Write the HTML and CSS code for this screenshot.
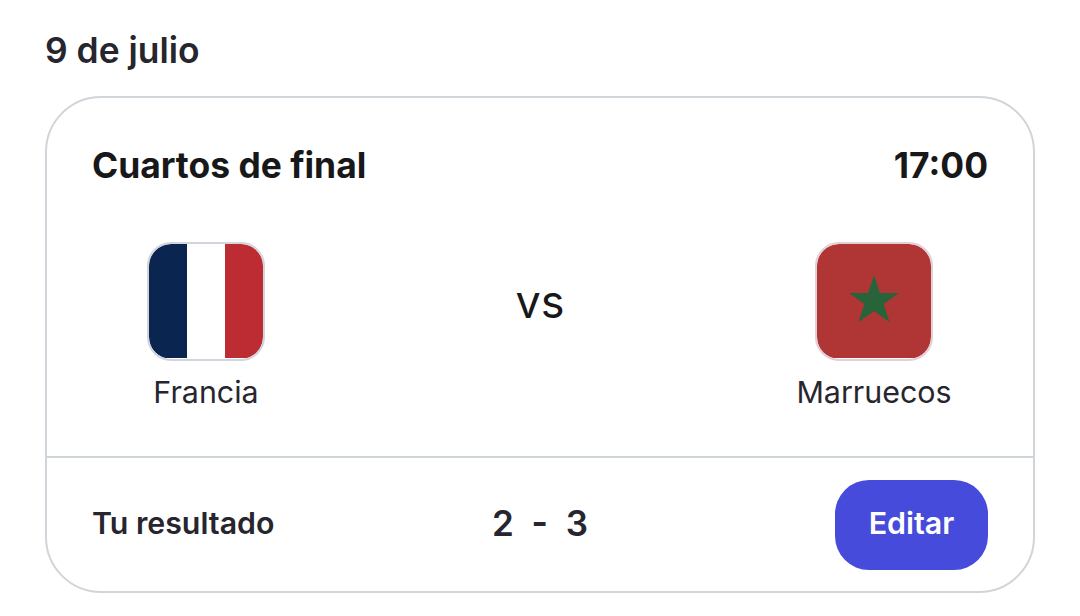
FILE: index.html
```html
<!DOCTYPE html>
<html lang="es">
<head>
    <meta charset="UTF-8">
    <meta name="viewport" content="width=device-width, initial-scale=1.0">
    <title>Partidos</title>
    <link rel="stylesheet" href="styles.css">
</head>
<body>
    <h2 class="date">9 de julio</h2>
    <div class="card">
        <div class="match">
            <div class="match-header">
                <span>Cuartos de final</span>
                <span>17:00</span>
            </div>
            <div class="teams">
                <div class="team">
                    <div class="flag france"></div>
                    <span class="team-name">Francia</span>
                </div>
                <span class="vs">vs</span>
                <div class="team">
                    <div class="flag morocco">
                        <svg width="50" height="49" viewBox="0 0 50 49">
                            <path fill="#28633a" d="M25 1L30.9 18.9H50L34.6 30.1L40.6 48.3L25 37L9.4 48.3L15.4 30.1L0 18.9H19.1Z"/>
                        </svg>
                    </div>
                    <span class="team-name">Marruecos</span>
                </div>
            </div>
        </div>
        <div class="result">
            <span class="result-label">Tu resultado</span>
            <div class="score">
                <span>2</span>
                <span class="dash">-</span>
                <span>3</span>
            </div>
            <button class="edit" type="button">Editar</button>
        </div>
    </div>
</body>
</html>
```

FILE: styles.css
```css
* {
    box-sizing: border-box;
}

body {
    margin: 0;
    padding: 29px 45px 0;
    background-color: #fff;
    color: #27262f;
    font-family: Inter, sans-serif;
}

.date {
    margin: 0 0 23px;
    font-size: 35.4px;
    font-weight: 600;
    line-height: 44px;
}

.card {
    height: 497px;
    border: 2px solid #d0d5da;
    border-radius: 56px;
}

.match {
    height: 360px;
    padding: 46px 45px 0;
    border-bottom: 2px solid #cdd5d8;
}

.match-header {
    display: flex;
    justify-content: space-between;
    color: #18181a;
    font-size: 35.4px;
    font-weight: 700;
    line-height: 44px;
}

.teams {
    display: grid;
    grid-template-columns: 228px 1fr 228px;
    margin-top: 54px;
}

.team {
    display: flex;
    flex-direction: column;
    align-items: center;
}

.flag {
    display: flex;
    justify-content: center;
    width: 118px;
    height: 119px;
    border: 2px solid #d3d5dc;
    border-radius: 24px;
}

.france {
    background: linear-gradient(to right, #0b2551 0 38px, #fff 38px 76px, #bd2c33 76px) 0 0 / 100% 114px no-repeat padding-box;
}

.morocco {
    padding-top: 30px;
    background: linear-gradient(#b03636, #b03636) 0 0 / 100% 114px no-repeat padding-box;
    border-color: #e2d0d6;
}

.team-name {
    margin-top: 11px;
    font-size: 30.4px;
    line-height: 40px;
}

.vs {
    margin-top: 33px;
    color: #18181a;
    font-size: 45px;
    line-height: 54px;
    text-align: center;
}

.result {
    display: grid;
    grid-template-columns: 1fr 96px 1fr;
    align-items: center;
    height: 133px;
    padding: 0 45px;
}

.result-label {
    padding-bottom: 4px;
    font-size: 30.3px;
    font-weight: 600;
}

.score {
    display: flex;
    justify-content: space-between;
    padding-bottom: 4px;
    font-size: 35px;
    font-weight: 600;
}

.dash {
    margin-top: -2px;
    font-weight: 700;
}

.edit {
    justify-self: end;
    width: 153px;
    height: 90px;
    padding: 0 0 4px;
    border: none;
    border-radius: 34px;
    background-color: #464bdb;
    color: #fff;
    font-family: inherit;
    font-size: 30.4px;
    font-weight: 600;
}
```
